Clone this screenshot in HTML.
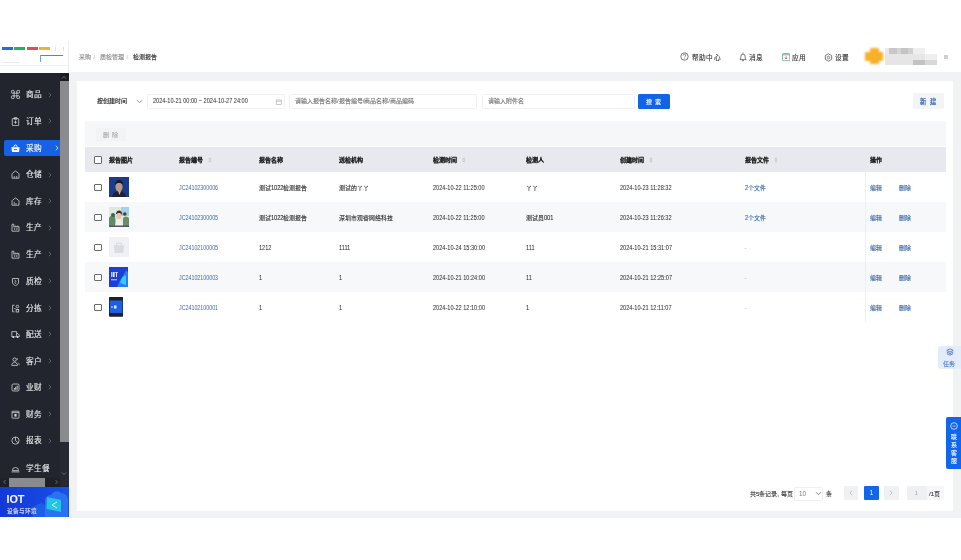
<!DOCTYPE html>
<html lang="zh-CN"><head><meta charset="utf-8">
<style>
*{margin:0;padding:0;box-sizing:border-box}
html,body{width:961px;height:560px;overflow:hidden;background:#fff;}
body{position:relative;will-change:transform;-webkit-text-stroke:.1px currentColor;font-family:"Liberation Sans",sans-serif;color:#333}
.a{position:absolute;white-space:nowrap}
#side{position:absolute;left:0;top:72.8px;width:68.8px;height:414px;background:#22252d}
.mi{position:absolute;left:0;width:60px;height:17px;color:#eceef0;font-size:7.7px;line-height:17px;font-weight:500}
.mi .ic{position:absolute;left:11px;top:4px;width:9px;height:9px}
.mi .tx{position:absolute;left:25.6px;top:.2px}
.mi .ar{position:absolute;left:47.5px;top:5.5px;color:#6b6e76}
.mi.on{left:4px;width:56px;height:16px;background:#1562e6;border-radius:2px 0 0 2px;color:#fff}
.mi.on .ic{left:7px}.mi.on .tx{left:21.6px}.mi.on .ar{left:51px;color:#fff}
#bg{position:absolute;left:68.6px;top:72px;width:892.4px;height:446px;background:#f1f2f4}
#card{position:absolute;left:76.6px;top:80.7px;width:876.2px;height:430.1px;background:#fff}
.inp{position:absolute;top:94px;height:14.5px;border:1px solid #f1f1f4;border-radius:1.5px;background:#fff;font-size:6px;line-height:12.5px;color:#555}
.ph{color:#707070}
.th{position:absolute;font-size:6px;font-weight:bold;color:#1d1d1d;line-height:8px;-webkit-text-stroke:.05px currentColor}
.td{position:absolute;font-size:5.9px;color:#262626;line-height:8px;font-weight:500}
.lk{color:#2e62a6}
.num{display:inline-block;font-size:7px;transform:scaleX(.8);transform-origin:0 50%;font-weight:400;color:#2e2e2e;-webkit-text-stroke:.04px currentColor}
.lk .num{color:#3f6ba6;transform:scaleX(.76);-webkit-text-stroke:0}
.n2{display:inline-block;font-size:7px;transform:scaleX(.8);transform-origin:0 50%;font-weight:400;overflow:visible}
.cb{position:absolute;left:94.4px;width:7.6px;height:7.6px;border:.9px solid #6a6a6a;border-radius:1px;background:#fff}
.srt{position:absolute;width:3px;height:5px}
.srt:before,.srt:after{content:"";position:absolute;left:0;border-left:1.5px solid transparent;border-right:1.5px solid transparent}
.srt:before{top:0;border-bottom:2.3px solid #c5c7cc}
.srt:after{bottom:0;border-top:2.3px solid #c5c7cc}
.row{position:absolute;left:84.5px;width:861px;height:30px}
.pg{position:absolute;top:486.3px;height:14px;background:#f0f1f3;border-radius:1px;font-size:6px;line-height:14px;text-align:center;color:#999;-webkit-text-stroke:0}
</style></head><body>

<!-- logo -->
<div class="a" style="left:2px;top:47.2px;width:10.8px;height:3px;background:#1f6fd0;filter:blur(.3px)"></div>
<div class="a" style="left:13.8px;top:47.2px;width:11.7px;height:3px;background:#27b061;filter:blur(.3px)"></div>
<div class="a" style="left:26.6px;top:47.2px;width:11.3px;height:3px;background:#e04d52;filter:blur(.3px)"></div>
<div class="a" style="left:39px;top:47.2px;width:11.3px;height:3px;background:#f0b233;filter:blur(.3px)"></div>
<div class="a" style="left:55px;top:47px;width:.8px;height:4px;background:#e2e2e2"></div>
<div class="a" style="left:63px;top:47px;width:.8px;height:4px;background:#e2e2e2"></div>
<div class="a" style="left:40px;top:54.6px;width:23px;height:1px;background:#4b8ac8;filter:blur(.2px)"></div>
<div class="a" style="left:40px;top:54.6px;width:1px;height:7px;background:#6ea3d6;filter:blur(.2px)"></div>
<div class="a" style="left:2px;top:61.5px;width:18px;height:.8px;background:#ececf0"></div>
<div class="a" style="left:0;top:65px;width:68px;height:1px;background:#f1f1f3"></div>
<div class="a" style="left:68px;top:41px;width:1px;height:32px;background:#ececee"></div>

<!-- breadcrumb -->
<div class="a" style="left:78.5px;top:53.2px;font-size:6px;line-height:8px;color:#888">采购</div>
<div class="a" style="left:93.5px;top:53.2px;font-size:6px;line-height:8px;color:#c4c4c4">/</div>
<div class="a" style="left:100px;top:53.2px;font-size:6px;line-height:8px;color:#888">质检管理</div>
<div class="a" style="left:126.5px;top:53.2px;font-size:6px;line-height:8px;color:#c4c4c4">/</div>
<div class="a" style="left:132.6px;top:53.2px;font-size:6px;line-height:8px;color:#222">检测报告</div>

<!-- header right -->
<svg class="a" style="left:679.5px;top:51.8px" width="9" height="9" viewBox="0 0 9 9"><circle cx="4.5" cy="4.5" r="3.7" fill="none" stroke="#555" stroke-width="0.8"/><path d="M3.3 3.5a1.2 1.2 0 1 1 1.6 1.1c-.3.2-.4.4-.4.8" fill="none" stroke="#555" stroke-width="0.7"/><circle cx="4.5" cy="6.4" r=".4" fill="#555"/></svg>
<div class="a" style="left:691.5px;top:53px;font-size:6.7px;line-height:9px;color:#333;letter-spacing:.45px">帮助中心</div>
<svg class="a" style="left:739px;top:52px" width="8" height="9.5" viewBox="0 0 8 9.5"><path d="M1 7.6c.8-.9.9-2 .9-3.4a2.1 2.1 0 0 1 4.2 0c0 1.4.1 2.5.9 3.4z" fill="none" stroke="#555" stroke-width=".8" stroke-linejoin="round"/><path d="M4 .6v1M3 8.7h2" stroke="#555" stroke-width=".8"/></svg>
<div class="a" style="left:749px;top:53px;font-size:6.7px;line-height:9px;color:#333;letter-spacing:.45px">消息</div>
<svg class="a" style="left:781.8px;top:53px" width="8.2" height="8.2" viewBox="0 0 8.2 8.2"><rect x=".45" y=".45" width="7.3" height="7.3" rx="1" fill="none" stroke="#5fa58a" stroke-width=".8"/><path d="M.5 1.8h7.2" stroke="#5fa58a" stroke-width=".9"/><path d="M4.1 3.3v2.6M2.9 4.8l1.2 1.2 1.2-1.2" fill="none" stroke="#d9534f" stroke-width=".8"/></svg>
<div class="a" style="left:791.5px;top:53px;font-size:6.7px;line-height:9px;color:#333;letter-spacing:.45px">应用</div>
<svg class="a" style="left:823.5px;top:52.5px" width="9" height="9" viewBox="0 0 9 9"><path d="M4.5.8l3.2 1.85v3.7L4.5 8.2 1.3 6.35v-3.7z" fill="none" stroke="#555" stroke-width="0.8"/><circle cx="4.5" cy="4.5" r="1.3" fill="none" stroke="#555" stroke-width="0.7"/></svg>
<div class="a" style="left:835px;top:53px;font-size:6.7px;line-height:9px;color:#333;letter-spacing:.45px">设置</div>
<!-- avatar pixelated -->
<div class="a" style="left:870.3px;top:47.7px;width:8.4px;height:16.3px;background:#f8b02a;filter:blur(.8px)"></div>
<div class="a" style="left:865px;top:52.4px;width:18px;height:8.9px;background:#f8b02a;filter:blur(.8px)"></div>
<div class="a" style="left:0;top:0;width:961px;height:80px;filter:blur(.5px)"><div class="a" style="left:885px;top:48px;width:4px;height:5.5px;background:#e8e8ee"></div>
<div class="a" style="left:889px;top:48px;width:8px;height:5.5px;background:#c8c8c8"></div>
<div class="a" style="left:897px;top:48px;width:4px;height:5.5px;background:#d5d5d5"></div>
<div class="a" style="left:901px;top:48px;width:7px;height:5.5px;background:#c4c4c4"></div>
<div class="a" style="left:908px;top:48px;width:5px;height:5.5px;background:#d0d0d0"></div>
<div class="a" style="left:913px;top:48px;width:12px;height:5.5px;background:#efefef"></div>
<div class="a" style="left:885px;top:53.5px;width:40px;height:6.5px;background:#e6e6e6"></div>
<div class="a" style="left:925px;top:53.5px;width:12px;height:6.5px;background:#efefef"></div>
<div class="a" style="left:885px;top:60px;width:28px;height:5px;background:#e5e5e5"></div>
<div class="a" style="left:913px;top:60px;width:12px;height:5px;background:#c2c2c2"></div>
<div class="a" style="left:925px;top:60px;width:12px;height:5px;background:#d8d8d8"></div>
<div class="a" style="left:944px;top:55px;width:4px;height:4px;background:#d0d0d0"></div></div>

<!-- sidebar -->
<div id="side">
  <div class="a" style="left:60px;top:0;width:8.6px;height:8.3px;background:#1b1d23"></div>
  <svg class="a" style="left:61px;top:2px" width="6" height="5" viewBox="0 0 6 5"><path d="M1 3.5l2-2 2 2" fill="none" stroke="#888" stroke-width="0.8"/></svg>
  <div class="a" style="left:60px;top:8.3px;width:8.6px;height:360.5px;background:#8a8b8e"></div>
  <div class="a" style="left:60px;top:368.8px;width:8.6px;height:44.5px;background:#262931"></div>
  <svg class="a" style="left:61px;top:398px" width="6" height="5" viewBox="0 0 6 5"><path d="M1 1.5l2 2 2-2" fill="none" stroke="#777" stroke-width="0.8"/></svg>
  <!-- hscroll -->
  <div class="a" style="left:0;top:405px;width:60px;height:9px;background:#1e2027"></div>
  <div class="a" style="left:9px;top:405.2px;width:36px;height:8.6px;background:#8a8b8e"></div>
  <svg class="a" style="left:2px;top:406px" width="5" height="6" viewBox="0 0 5 6"><path d="M3.5 1l-2 2 2 2" fill="none" stroke="#777" stroke-width="0.8"/></svg>
  <svg class="a" style="left:54px;top:406px" width="5" height="6" viewBox="0 0 5 6"><path d="M1.5 1l2 2-2 2" fill="none" stroke="#777" stroke-width="0.8"/></svg>

  <div class="mi" style="top:13.5px"><svg class="ic" viewBox="0 0 9 9"><g fill="none" stroke="#ddd" stroke-width="0.75"><path d="M3.2 3.2H2.3a1.5 1.5 0 1 1 .9-.9zM5.8 3.2h.9a1.5 1.5 0 1 0-.9-.9zM3.2 5.8H2.3a1.5 1.5 0 1 0 .9.9zM5.8 5.8h.9a1.5 1.5 0 1 1-.9.9z"/><path d="M3.2 2.3v4.4M5.8 2.3v4.4M2.3 3.2h4.4M2.3 5.8h4.4" stroke-width=".6"/></g></svg><span class="tx">商品</span><svg class="ar" width="4" height="6" viewBox="0 0 4 6"><path d="M.8 .8L3 3 .8 5.2" fill="none" stroke="currentColor" stroke-width=".8"/></svg></div>
  <div class="mi" style="top:40px"><svg class="ic" viewBox="0 0 9 9"><g fill="none" stroke="#ddd" stroke-width="0.75"><rect x="1.3" y="1.6" width="6.4" height="7" rx=".5"/><path d="M3.2 .6h2.6v1.6H3.2z"/><path d="M4.5 3.6v3.2M3 5.2h3"/></g></svg><span class="tx">订单</span><svg class="ar" width="4" height="6" viewBox="0 0 4 6"><path d="M.8 .8L3 3 .8 5.2" fill="none" stroke="currentColor" stroke-width=".8"/></svg></div>
  <div class="mi on" style="top:67.2px"><svg class="ic" viewBox="0 0 9 9"><path d="M.4 3.2h8.2L8 8H1z" fill="#fff"/><path d="M3 3.3V2.5a1.5 1.5 0 0 1 3 0v.8" fill="none" stroke="#fff" stroke-width="1"/><path d="M2.8 5.6h3.4" stroke="#1562e6" stroke-width=".9"/></svg><span class="tx">采购</span><svg class="ar" width="4" height="6" viewBox="0 0 4 6"><path d="M.8 .8L3 3 .8 5.2" fill="none" stroke="currentColor" stroke-width=".8"/></svg></div>
  <div class="mi" style="top:93.5px"><svg class="ic" viewBox="0 0 9 9"><g fill="none" stroke="#ddd" stroke-width="0.75" stroke-linejoin="round"><path d="M1 8.2V4.3Q1 3.6 1.6 3.1L4.5 1l2.9 2.1Q8 3.6 8 4.3v3.9z"/><path d="M3.3 8.2V6M5.7 8.2V6" stroke-width=".7"/></g></svg><span class="tx">仓储</span><svg class="ar" width="4" height="6" viewBox="0 0 4 6"><path d="M.8 .8L3 3 .8 5.2" fill="none" stroke="currentColor" stroke-width=".8"/></svg></div>
  <div class="mi" style="top:120px"><svg class="ic" viewBox="0 0 9 9"><g fill="none" stroke="#ddd" stroke-width="0.75" stroke-linejoin="round"><path d="M1 8.2V4.3Q1 3.6 1.6 3.1L4.5 1l2.9 2.1Q8 3.6 8 4.3v3.9z"/></g><g fill="#ddd"><circle cx="3.3" cy="5.2" r=".55"/><circle cx="3.3" cy="6.9" r=".55"/><circle cx="5" cy="6.9" r=".55"/></g></svg><span class="tx">库存</span><svg class="ar" width="4" height="6" viewBox="0 0 4 6"><path d="M.8 .8L3 3 .8 5.2" fill="none" stroke="currentColor" stroke-width=".8"/></svg></div>
  <div class="mi" style="top:146.5px"><svg class="ic" viewBox="0 0 9 9"><g fill="none" stroke="#ddd" stroke-width="0.75" stroke-linejoin="round"><path d="M1 8.2V1.2h1.8v3l2-1.3v1.3l2-1.3v1.3L8 3.5v4.7z"/></g><g fill="#ddd"><rect x="3" y="5.4" width="1.2" height="1.2"/><rect x="5.2" y="5.4" width="1.2" height="1.2"/></g></svg><span class="tx">生产</span><svg class="ar" width="4" height="6" viewBox="0 0 4 6"><path d="M.8 .8L3 3 .8 5.2" fill="none" stroke="currentColor" stroke-width=".8"/></svg></div>
  <div class="mi" style="top:173px"><svg class="ic" viewBox="0 0 9 9"><g fill="none" stroke="#ddd" stroke-width="0.75" stroke-linejoin="round"><path d="M1 8.2V1.2h1.8v3l2-1.3v1.3l2-1.3v1.3L8 3.5v4.7z"/></g><g fill="#ddd"><rect x="3" y="5.4" width="1.2" height="1.2"/><rect x="5.2" y="5.4" width="1.2" height="1.2"/></g></svg><span class="tx">生产</span><svg class="ar" width="4" height="6" viewBox="0 0 4 6"><path d="M.8 .8L3 3 .8 5.2" fill="none" stroke="currentColor" stroke-width=".8"/></svg></div>
  <div class="mi" style="top:200px"><svg class="ic" viewBox="0 0 9 9"><g fill="none" stroke="#ddd" stroke-width="0.75" stroke-linejoin="round"><path d="M1.5 1.5h6v3.6c0 1.8-1.4 3-3 3.6-1.6-.6-3-1.8-3-3.6z"/><path d="M3.8 2.8l1.4 1.6-1.6 1 1.8 1.6" stroke-width=".65"/></g></svg><span class="tx">质检</span><svg class="ar" width="4" height="6" viewBox="0 0 4 6"><path d="M.8 .8L3 3 .8 5.2" fill="none" stroke="currentColor" stroke-width=".8"/></svg></div>
  <div class="mi" style="top:227px"><svg class="ic" viewBox="0 0 9 9"><g fill="none" stroke="#ddd" stroke-width="0.75"><path d="M3.5 1.2H1.6v6.6h1.9"/><circle cx="6.4" cy="2.5" r="1.3"/><rect x="5.1" y="5.4" width="2.6" height="2.6"/><path d="M3 4.5h1.6" stroke-width=".6"/></g></svg><span class="tx">分拣</span><svg class="ar" width="4" height="6" viewBox="0 0 4 6"><path d="M.8 .8L3 3 .8 5.2" fill="none" stroke="currentColor" stroke-width=".8"/></svg></div>
  <div class="mi" style="top:253px"><svg class="ic" viewBox="0 0 9 9"><g fill="none" stroke="#ddd" stroke-width="0.75" stroke-linejoin="round"><path d="M.8 1.6h4.8v5.2H.8zM5.6 3.6h1.4l1.2 1.4v1.8H5.6"/></g><g fill="#ddd"><circle cx="2.2" cy="7" r=".9"/><circle cx="6.6" cy="7" r=".9"/></g></svg><span class="tx">配送</span><svg class="ar" width="4" height="6" viewBox="0 0 4 6"><path d="M.8 .8L3 3 .8 5.2" fill="none" stroke="currentColor" stroke-width=".8"/></svg></div>
  <div class="mi" style="top:280px"><svg class="ic" viewBox="0 0 9 9"><g fill="none" stroke="#ddd" stroke-width="0.75"><circle cx="3.6" cy="2.6" r="1.7"/><path d="M.8 8.4c0-1.9 1.2-3.1 2.8-3.1s2.8 1.2 2.8 3.1z"/><path d="M6.2 1v2.2M7 5.6c.7.4 1.2 1.4 1.2 2.6" stroke-width=".65"/></g></svg><span class="tx">客户</span><svg class="ar" width="4" height="6" viewBox="0 0 4 6"><path d="M.8 .8L3 3 .8 5.2" fill="none" stroke="currentColor" stroke-width=".8"/></svg></div>
  <div class="mi" style="top:306px"><svg class="ic" viewBox="0 0 9 9"><g fill="none" stroke="#ddd" stroke-width="0.75"><rect x="1" y="1" width="7" height="7" rx="1.2"/></g><g fill="#ddd"><rect x="2.9" y="5" width=".9" height="1.8"/><rect x="4.3" y="3.8" width=".9" height="3"/><rect x="5.7" y="2.6" width=".9" height="4.2"/></g></svg><span class="tx">业财</span><svg class="ar" width="4" height="6" viewBox="0 0 4 6"><path d="M.8 .8L3 3 .8 5.2" fill="none" stroke="currentColor" stroke-width=".8"/></svg></div>
  <div class="mi" style="top:333px"><svg class="ic" viewBox="0 0 9 9"><g fill="none" stroke="#ddd" stroke-width="0.75"><rect x="1" y="1.2" width="7" height="7" rx=".5"/><path d="M1 2.6h7"/></g><rect x="3.4" y="4" width="2.2" height="2.6" fill="#ddd"/></svg><span class="tx">财务</span><svg class="ar" width="4" height="6" viewBox="0 0 4 6"><path d="M.8 .8L3 3 .8 5.2" fill="none" stroke="currentColor" stroke-width=".8"/></svg></div>
  <div class="mi" style="top:359.5px"><svg class="ic" viewBox="0 0 9 9"><g fill="none" stroke="#ddd" stroke-width="0.75"><circle cx="4.5" cy="4.6" r="3.6"/><path d="M4.5 1v3.6L7 6.6"/></g></svg><span class="tx">报表</span><svg class="ar" width="4" height="6" viewBox="0 0 4 6"><path d="M.8 .8L3 3 .8 5.2" fill="none" stroke="currentColor" stroke-width=".8"/></svg></div>
  <div class="mi" style="top:387px"><svg class="ic" viewBox="0 0 9 9"><g fill="none" stroke="#ddd" stroke-width="0.75" stroke-linejoin="round"><path d="M1.4 6.6a3.1 3.1 0 0 1 6.2 0z"/><path d="M.6 7.9h7.8"/></g></svg><span class="tx">学生餐</span></div>
</div>
<!-- IOT -->
<div class="a" style="left:0;top:486.6px;width:68.8px;height:30.9px;background:linear-gradient(90deg,#1438d6,#1646e0 60%,#1a52e8)"></div>
<svg class="a" style="left:32px;top:489px" width="36.5" height="28" viewBox="0 0 36.5 28"><path d="M1 28V18l8-4 6 3 4-4v15z" fill="#1f5ee8"/><path d="M13 28V12c0-4 3-6 6-6 2-4 7-5 10-2 4 0 7 3 7 7v17z" fill="#2a72f2"/><path d="M15 8l14 3v12l-14-3z" fill="#24c4e4"/><path d="M15 8l-1 12 1 0z" fill="#1aa8d8"/><path d="M25 13l-5 3 5 3" fill="none" stroke="#dff" stroke-width=".9"/></svg>
<div class="a" style="left:6.4px;top:493.2px;font-size:10.8px;font-weight:bold;color:#f4f6ff;line-height:12px;letter-spacing:0">IOT</div>
<div class="a" style="left:6.6px;top:506.9px;font-size:5.6px;color:#dfe6ff;line-height:8px">设备与环境</div>

<!-- content -->
<div id="bg"></div>
<div id="card"></div>

<!-- filter -->
<div class="a" style="left:97px;top:97px;font-size:6px;line-height:8px;color:#111;font-weight:500">按创建时间</div>
<svg class="a" style="left:136px;top:99px" width="7" height="5" viewBox="0 0 7 5"><path d="M1 1.2l2.5 2.5L6 1.2" fill="none" stroke="#777" stroke-width="0.8"/></svg>
<div class="inp" style="left:146.5px;width:138px"><span class="num" style="position:absolute;left:5px;top:0;color:#333">2024-10-21 00:00 ~ 2024-10-27 24:00</span>
<svg style="position:absolute;left:128px;top:3.5px" width="6" height="6" viewBox="0 0 6 6"><rect x=".5" y="1" width="5" height="4.5" fill="none" stroke="#aaa" stroke-width=".6"/><path d="M.5 2.3h5" stroke="#aaa" stroke-width=".6"/></svg></div>
<div class="inp" style="left:289px;width:188px"><span class="ph" style="position:absolute;left:5px;top:0">请输入报告名称/报告编号/商品名称/商品编码</span></div>
<div class="inp" style="left:482px;width:153px"><span class="ph" style="position:absolute;left:4.5px;top:0">请输入附件名</span></div>
<div class="a" style="left:638px;top:94px;width:31.5px;height:15.3px;background:#1064e8;border-radius:1.5px;color:#fff;font-size:6px;line-height:17.2px;text-align:center;letter-spacing:3.3px;text-indent:3.3px;-webkit-text-stroke:.1px currentColor">搜索</div>
<div class="a" style="left:912.5px;top:93.3px;width:31px;height:15.3px;background:#f3f4f6;border-radius:1.5px;color:#2f62a8;font-size:6.3px;line-height:18.6px;text-align:center;letter-spacing:3.2px;text-indent:3.2px;-webkit-text-stroke:.2px currentColor">新建</div>

<!-- toolbar -->
<div class="a" style="left:84.5px;top:121.4px;width:861px;height:25.1px;background:#f6f7f9"></div>
<div class="a" style="left:96px;top:128px;width:30px;height:13px;background:#f2f3f5;border-radius:1px;color:#a9abb0;font-size:6.2px;line-height:14px;text-align:center;letter-spacing:2.3px;text-indent:1.6px">删除</div>

<!-- table -->
<div class="a" style="left:84.5px;top:146.5px;width:861px;height:25.3px;background:#e8e9ee"></div>
<div class="row" style="top:202px;background:#f7f8fa"></div>
<div class="row" style="top:262px;background:#f7f8fa"></div>
<div class="a" style="left:865px;top:171.6px;width:0.7px;height:150.4px;background:#eeeff2"></div>

<div class="cb" style="top:156.2px"></div>
<div class="th" style="left:108.5px;top:156px">报告图片</div>
<div class="th" style="left:179px;top:156px">报告编号</div><svg class="a" style="left:208.0px;top:157px" width="4" height="6" viewBox="0 0 4 6"><path d="M2 .3L3.6 2.6H.4zM2 5.7L3.6 3.4H.4z" fill="#c3c5cb"/></svg>
<div class="th" style="left:258.5px;top:156px">报告名称</div>
<div class="th" style="left:339px;top:156px">送检机构</div>
<div class="th" style="left:432.5px;top:156px">检测时间</div><svg class="a" style="left:461.5px;top:157px" width="4" height="6" viewBox="0 0 4 6"><path d="M2 .3L3.6 2.6H.4zM2 5.7L3.6 3.4H.4z" fill="#c3c5cb"/></svg>
<div class="th" style="left:526px;top:156px">检测人</div>
<div class="th" style="left:619.5px;top:156px">创建时间</div><svg class="a" style="left:649.0px;top:157px" width="4" height="6" viewBox="0 0 4 6"><path d="M2 .3L3.6 2.6H.4zM2 5.7L3.6 3.4H.4z" fill="#c3c5cb"/></svg>
<div class="th" style="left:744.5px;top:156px">报告文件</div><svg class="a" style="left:774.0px;top:157px" width="4" height="6" viewBox="0 0 4 6"><path d="M2 .3L3.6 2.6H.4zM2 5.7L3.6 3.4H.4z" fill="#c3c5cb"/></svg>
<div class="th" style="left:870px;top:156px">操作</div>

<!-- row1 -->
<div class="cb" style="top:183.7px;height:7.2px"></div>
<svg class="a" style="left:109px;top:177px" width="20" height="20" viewBox="0 0 20 20"><defs><filter id="bl" x="-10%" y="-10%" width="120%" height="120%"><feGaussianBlur stdDeviation=".45"/></filter></defs><rect width="20" height="20" rx="1" fill="#1c3d8e"/><g filter="url(#bl)"><rect x="0" y="0" width="20" height="20" fill="#1a3a8a"/><path d="M3 20c1-4 4-6 7-6s6 2 7 6z" fill="#1e2230"/><ellipse cx="10" cy="10" rx="3.6" ry="4.6" fill="#b89a88"/><path d="M6 8c0-3 2-5 4-5s4.5 1.5 4.3 5c-1-1.5-2.5-2-4.3-2S7 6.5 6 8z" fill="#1c1e26"/><path d="M9 14l1.5 4 1.5-4z" fill="#c7a898"/></g></svg>
<div class="td lk" style="left:179px;top:183.5px"><span class="num">JC24102300006</span></div>
<div class="td" style="left:258.5px;top:183.5px">测试<span class="n2" style="width:12.4px">1022</span>检测报告</div>
<div class="td" style="left:339px;top:183.5px">测试的丫丫</div>
<div class="td" style="left:432.5px;top:183.5px"><span class="num">2024-10-22 11:25:00</span></div>
<div class="td" style="left:526px;top:183.5px">丫丫</div>
<div class="td" style="left:619.5px;top:183.5px"><span class="num">2024-10-23 11:28:32</span></div>
<div class="td lk" style="left:744.5px;top:183.5px"><span class="n2" style="width:3.1px">2</span>个文件</div>
<div class="td lk" style="left:870px;top:183.5px">编辑</div><div class="td lk" style="left:898.5px;top:183.5px">删除</div>
<!-- row2 -->
<div class="cb" style="top:213.7px;height:7.2px"></div>
<svg class="a" style="left:109px;top:207px" width="20" height="20" viewBox="0 0 20 20"><g filter="url(#bl)"><rect width="20" height="20" fill="#dfe9dc"/><path d="M12 0h8v9h-8z" fill="#a9d0ea"/><path d="M0 11c2-3 4-4 6-2l1 11H0z" fill="#5e8b64"/><path d="M14 11c2-2 4-2 6 0v9h-6z" fill="#6b8f66"/><path d="M2 8a2 2 0 1 1 4 0 2 2 0 1 1-4 0z" fill="#3e5d6b"/><path d="M14 7a1.8 1.8 0 1 1 3.6 0 1.8 1.8 0 1 1-3.6 0z" fill="#4a4040"/><path d="M6 20c0-5 2-8 4-8s4 3 4 8z" fill="#f2efe8"/><ellipse cx="10" cy="9" rx="2.4" ry="3" fill="#e3c6ad"/><path d="M6.8 8c0-3 1.5-4.5 3.3-4.5S13.4 5 13.2 8.5c-.8-2-2-2.5-3.2-2.5S7.5 6.5 6.8 8z" fill="#3b2e25"/><rect y="18.5" width="20" height="1.5" fill="#556"/></g></svg>
<div class="td lk" style="left:179px;top:213.5px"><span class="num">JC24102300005</span></div>
<div class="td" style="left:258.5px;top:213.5px">测试<span class="n2" style="width:12.4px">1022</span>检测报告</div>
<div class="td" style="left:339px;top:213.5px">深圳市观睿网络科技</div>
<div class="td" style="left:432.5px;top:213.5px"><span class="num">2024-10-22 11:25:00</span></div>
<div class="td" style="left:526px;top:213.5px">测试员<span class="n2" style="width:9.3px">001</span></div>
<div class="td" style="left:619.5px;top:213.5px"><span class="num">2024-10-23 11:26:32</span></div>
<div class="td lk" style="left:744.5px;top:213.5px"><span class="n2" style="width:3.1px">2</span>个文件</div>
<div class="td lk" style="left:870px;top:213.5px">编辑</div><div class="td lk" style="left:898.5px;top:213.5px">删除</div>
<!-- row3 -->
<div class="cb" style="top:243.7px;height:7.2px"></div>
<svg class="a" style="left:109px;top:237px" width="20" height="20" viewBox="0 0 20 20"><rect width="20" height="20" rx="1" fill="#eff1f4"/><g filter="url(#bl)"><path d="M5 8.3h10l-.6 7.6H5.6z" fill="#d9dce1"/><path d="M7.6 8.5V6.2h4.8v2.3" fill="none" stroke="#d9dce1" stroke-width="1.1"/></g></svg>
<div class="td lk" style="left:179px;top:243.5px"><span class="num">JC24102100005</span></div>
<div class="td" style="left:258.5px;top:243.5px"><span class="num">1212</span></div>
<div class="td" style="left:339px;top:243.5px"><span class="num">1111</span></div>
<div class="td" style="left:432.5px;top:243.5px"><span class="num">2024-10-24 15:30:00</span></div>
<div class="td" style="left:526px;top:243.5px"><span class="num">111</span></div>
<div class="td" style="left:619.5px;top:243.5px"><span class="num">2024-10-21 15:31:07</span></div>
<div class="td" style="left:744.5px;top:243.5px;color:#aaa">-</div>
<div class="td lk" style="left:870px;top:243.5px">编辑</div><div class="td lk" style="left:898.5px;top:243.5px">删除</div>
<!-- row4 -->
<div class="cb" style="top:273.7px;height:7.2px"></div>
<svg class="a" style="left:109px;top:266.7px" width="19" height="20.2" viewBox="0 0 19 20.2"><g filter="url(#bl)"><rect width="19" height="20.2" fill="#1a3fd6"/><path d="M8 20.2l3-7 4-6 2-4 2 2v15z" fill="#2a7cf0"/><path d="M11 16l2-5 3-3 1 2v8z" fill="#2ad2f2"/><path d="M2 5h.8v5H2zM3.6 5h2v5h-2zM6.4 5h2.2v.9H6.4zM7 5.9h.9V10H7z" fill="#e8f0ff"/><rect x="2" y="12" width="6" height="1.4" fill="#8fb0ff"/></g></svg>
<div class="td lk" style="left:179px;top:273.5px"><span class="num">JC24102100003</span></div>
<div class="td" style="left:258.5px;top:273.5px"><span class="num">1</span></div>
<div class="td" style="left:339px;top:273.5px"><span class="num">1</span></div>
<div class="td" style="left:432.5px;top:273.5px"><span class="num">2024-10-21 10:24:00</span></div>
<div class="td" style="left:526px;top:273.5px"><span class="num">11</span></div>
<div class="td" style="left:619.5px;top:273.5px"><span class="num">2024-10-21 12:25:07</span></div>
<div class="td" style="left:744.5px;top:273.5px;color:#aaa">-</div>
<div class="td lk" style="left:870px;top:273.5px">编辑</div><div class="td lk" style="left:898.5px;top:273.5px">删除</div>
<!-- row5 -->
<div class="cb" style="top:303.7px;height:7.2px"></div>
<svg class="a" style="left:109px;top:297.2px" width="14.2" height="19.8" viewBox="0 0 14.2 19.8"><rect width="14.2" height="19.8" rx=".8" fill="#1b2030"/><g filter="url(#bl)"><rect x=".8" y="3.5" width="12.6" height="12.5" fill="#1e5fe6"/><path d="M2.5 9h1v2h-1zM5 8.5h2.5v3H5z" fill="#dfeaff"/></g></svg>
<div class="td lk" style="left:179px;top:303.5px"><span class="num">JC24102100001</span></div>
<div class="td" style="left:258.5px;top:303.5px"><span class="num">1</span></div>
<div class="td" style="left:339px;top:303.5px"><span class="num">1</span></div>
<div class="td" style="left:432.5px;top:303.5px"><span class="num">2024-10-22 12:10:00</span></div>
<div class="td" style="left:526px;top:303.5px"><span class="num">1</span></div>
<div class="td" style="left:619.5px;top:303.5px"><span class="num">2024-10-21 12:11:07</span></div>
<div class="td" style="left:744.5px;top:303.5px;color:#aaa">-</div>
<div class="td lk" style="left:870px;top:303.5px">编辑</div><div class="td lk" style="left:898.5px;top:303.5px">删除</div>

<!-- pagination -->
<div class="a" style="left:750px;top:489.5px;font-size:6px;line-height:8px;color:#333">共5条记录, 每页</div>
<div class="a" style="left:794px;top:486.5px;width:29px;height:14px;border:1px solid #f0f0f3;border-radius:1px;background:#fff"></div>
<div class="a" style="left:799px;top:490.3px;font-size:6.3px;line-height:8px;color:#777;-webkit-text-stroke:0">10</div>
<svg class="a" style="left:815px;top:491px" width="7" height="5" viewBox="0 0 7 5"><path d="M1 1.2l2.5 2.5L6 1.2" fill="none" stroke="#666" stroke-width="0.8"/></svg>
<div class="a" style="left:826px;top:489.5px;font-size:6px;line-height:8px;color:#333">条</div>
<div class="pg" style="left:844.2px;width:14.2px"><svg width="4" height="6" viewBox="0 0 4 6" style="margin-top:4px"><path d="M3 .8L1 3l2 2.2" fill="none" stroke="#aaa" stroke-width=".7"/></svg></div>
<div class="pg" style="left:864.2px;width:14.5px;background:#1366ec;color:#fff;font-size:6.3px">1</div>
<div class="pg" style="left:884.2px;width:14.5px"><svg width="4" height="6" viewBox="0 0 4 6" style="margin-top:4px"><path d="M1 .8L3 3 1 5.2" fill="none" stroke="#aaa" stroke-width=".7"/></svg></div>
<div class="a" style="left:906.5px;top:486.3px;width:37px;height:14px;border:none;border-radius:1px;background:#f7f7f9"></div>
<div class="pg" style="left:906.5px;width:20px;color:#aaa;background:#eff0f2">1</div>
<div class="a" style="left:929px;top:489.5px;font-size:6px;line-height:8px;color:#333">/1页</div>

<!-- right floats -->
<div class="a" style="left:937.5px;top:346px;width:24px;height:22.5px;background:#e3ecfb;border-radius:3px 0 0 3px"></div>
<svg class="a" style="left:945.5px;top:348px" width="8" height="8" viewBox="0 0 8 8"><g fill="none" stroke="#4a72bc" stroke-width=".85" stroke-linejoin="round"><path d="M4 .8l3.2 1.6L4 4 .8 2.4z"/><path d="M.8 4L4 5.6 7.2 4M.8 5.6L4 7.2l3.2-1.6"/></g></svg>
<div class="a" style="left:943px;top:359.5px;font-size:6px;line-height:8px;color:#4a78c8">任务</div>
<div class="a" style="left:946px;top:417px;width:15px;height:51.5px;background:#1366ec;border-radius:2px 0 0 2px"></div>
<svg class="a" style="left:950px;top:422px" width="8" height="8" viewBox="0 0 8 8"><circle cx="4" cy="4" r="3.3" fill="none" stroke="#fff" stroke-width=".7"/><path d="M2.5 4h3" stroke="#fff" stroke-width=".6"/></svg>
<div class="a" style="left:950.5px;top:433px;width:7px;font-size:6px;line-height:8px;color:#fff;white-space:normal;word-break:break-all">联系客服</div>

</body></html>
